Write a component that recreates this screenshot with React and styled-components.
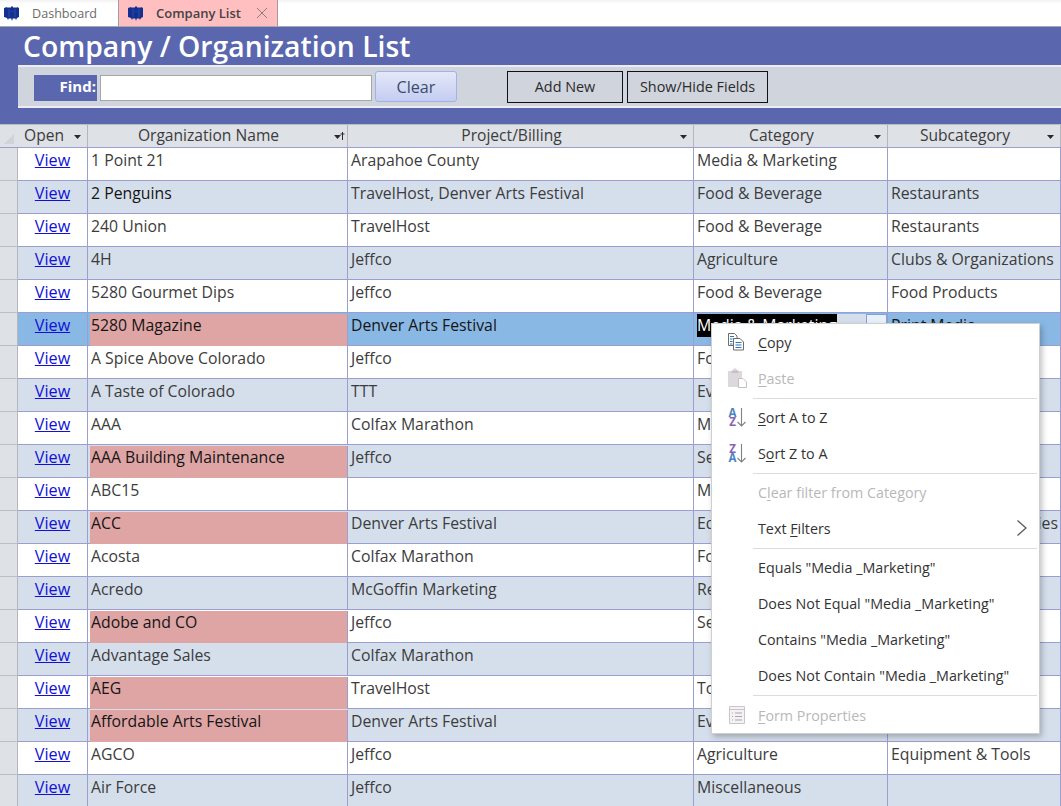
import styled, { createGlobalStyle } from "styled-components";

const GlobalStyle = createGlobalStyle`
  html, body {
    margin: 0;
    padding: 0;
    background: #ffffff;
    overflow: hidden;
  }
  body {
    font-family: "Open Sans", "Noto Sans", "Liberation Sans", sans-serif;
    color: #2b2b2b;
  }
`;

const filas = [
  { nombre: "1 Point 21", proyecto: "Arapahoe County", categoria: "Media & Marketing", sub: "" },
  { nombre: "2 Penguins", proyecto: "TravelHost, Denver Arts Festival", categoria: "Food & Beverage", sub: "Restaurants", oscuro: true },
  { nombre: "240 Union", proyecto: "TravelHost", categoria: "Food & Beverage", sub: "Restaurants" },
  { nombre: "4H", proyecto: "Jeffco", categoria: "Agriculture", sub: "Clubs & Organizations" },
  { nombre: "5280 Gourmet Dips", proyecto: "Jeffco", categoria: "Food & Beverage", sub: "Food Products" },
  { nombre: "5280 Magazine", proyecto: "Denver Arts Festival", categoria: "Media & Marketing", sub: "Print Media", rosa: true, activa: true },
  { nombre: "A Spice Above Colorado", proyecto: "Jeffco", categoria: "Food & Beverage", sub: "Food Products" },
  { nombre: "A Taste of Colorado", proyecto: "TTT", categoria: "Events", sub: "" },
  { nombre: "AAA", proyecto: "Colfax Marathon", categoria: "Media & Marketing", sub: "" },
  { nombre: "AAA Building Maintenance", proyecto: "Jeffco", categoria: "Services", sub: "Cleaning Supply", rosa: true },
  { nombre: "ABC15", proyecto: "", categoria: "Media & Marketing", sub: "" },
  { nombre: "ACC", proyecto: "Denver Arts Festival", categoria: "Education", sub: "Colleges & Universities", rosa: true },
  { nombre: "Acosta", proyecto: "Colfax Marathon", categoria: "Food & Beverage", sub: "" },
  { nombre: "Acredo", proyecto: "McGoffin Marketing", categoria: "Retail", sub: "" },
  { nombre: "Adobe and CO", proyecto: "Jeffco", categoria: "Services", sub: "", rosa: true },
  { nombre: "Advantage Sales", proyecto: "Colfax Marathon", categoria: "", sub: "" },
  { nombre: "AEG", proyecto: "TravelHost", categoria: "Tourism", sub: "", rosa: true },
  { nombre: "Affordable Arts Festival", proyecto: "Denver Arts Festival", categoria: "Events", sub: "", rosa: true },
  { nombre: "AGCO", proyecto: "Jeffco", categoria: "Agriculture", sub: "Equipment & Tools" },
  { nombre: "Air Force", proyecto: "Jeffco", categoria: "Miscellaneous", sub: "" },
];

const Logo = () => (
  <svg width="16" height="15" viewBox="0 0 16 15">
    <path fill="#12308f" d="M0 2l3-1 1 1 1-1 1 1 2-2 2 2 1-1 1 1 1-1 2 1v9l-2 1-1 2-1-2-1 1-1-1-1 3-1-3-1 1-1-1-1 2-1-2-3-1z" />
    <path fill="#2f4cab" d="M4.500 3h1v8h-1zM10.500 3h1v8h-1zM6.500 5h1v1h-1zM8.500 5h1v1h-1z" />
  </svg>
);

const FlechaFiltro = ({ orden }) => (
  <svg width="11" height="12" viewBox="0 0 11 12">
    <path fill="#2a2a2a" d="M0 5h7L3.500 9z" />
    {orden && <path fill="#2a2a2a" d="M8 2h1v8H8zM6.500 3.500h4v1h-4z" />}
  </svg>
);

const IconoCopiar = () => (
  <svg width="18" height="18" viewBox="0 0 18 18" fill="none">
    <path d="M.5.5h6l2.500 2.500v2.500H5.500v7H.5z" fill="#fff" stroke="#6d6d6d" />
    <path d="M5.500 5.500h6.500l3.500 3.500v8H5.500z" fill="#fff" stroke="#6d6d6d" />
    <path d="M2 3.500h4M2 6h2.500M2 8.500h2.500M2 11h2.500M7.500 9.500h6M7.500 12h6M7.500 14.500h6" stroke="#2f74b5" />
  </svg>
);

const IconoPegar = () => (
  <svg width="19" height="20" viewBox="0 0 19 20">
    <path fill="#dcd8dc" d="M0 3h5V1.500L7 0l2 1.500V3h5v16H0z" />
    <path fill="#c4c0c4" d="M3.500 2.500h7V5h-7z" />
    <path fill="#fff" stroke="#c4c0c4" d="M10.500 10.500h4.500l3.500 3.500v5.500h-8z" />
  </svg>
);

const IconoOrden = ({ invertido }) => (
  <Orden>
    <Letras>
      <LetraOrden $color={invertido ? "#8a5fb5" : "#4a84c0"}>{invertido ? "Z" : "A"}</LetraOrden>
      <LetraOrden $color={invertido ? "#4a84c0" : "#8a5fb5"}>{invertido ? "A" : "Z"}</LetraOrden>
    </Letras>
    <svg width="9" height="19" viewBox="0 0 9 19" fill="none">
      <path d="M4.500 0v18M.5 14l4 4 4-4" stroke="#808080" strokeWidth="1.100" />
    </svg>
  </Orden>
);

const IconoForm = () => (
  <svg width="16" height="18" viewBox="0 0 16 18" fill="none">
    <path d="M.5.5h15v17H.5z" fill="#f4f2f4" stroke="#c9c5c9" />
    <path d="M.5 3.500h15" stroke="#c9c5c9" />
    <path d="M6 7h7M6 10.500h7M6 14h7M3 7h1M3 10.500h1M3 14h1" stroke="#a9a5a9" />
  </svg>
);

const Flecha = () => (
  <svg width="12" height="18" viewBox="0 0 12 18" fill="none">
    <path d="M1.500 1.500L10 9l-8.500 7.500" stroke="#555" strokeWidth="1.200" />
  </svg>
);

export default function App() {
  return (
    <Pagina>
      <GlobalStyle />
      <BarraTabs>
        <Tab>
          <Logo />
          <span>Dashboard</span>
        </Tab>
        <Tab $activa>
          <Logo />
          <span>Company List</span>
          <Cerrar>
            <svg width="12" height="12" viewBox="0 0 12 12" fill="none">
              <path d="M1 1l10 10M11 1L1 11" stroke="#8d7f7f" />
            </svg>
          </Cerrar>
        </Tab>
      </BarraTabs>

      <Encabezado>
        <Titulo>Company / Organization List</Titulo>
        <Herramientas>
          <Find>Find:</Find>
          <CampoFind />
          <BotonClear>Clear</BotonClear>
          <BotonNegro $ancho="116px" $margen="50px">Add New</BotonNegro>
          <BotonNegro $ancho="141px" $margen="4px">Show/Hide Fields</BotonNegro>
        </Herramientas>
      </Encabezado>

      <Tabla>
        <FilaCabecera>
          <Esquina>
            <svg width="12" height="12" viewBox="0 0 12 12">
              <path fill="#cfd4da" d="M11 1v10H1z" />
            </svg>
          </Esquina>
          <CeldaCabecera $pegado>
            Open
            <Filtro><FlechaFiltro /></Filtro>
          </CeldaCabecera>
          <CeldaCabecera>
            Organization Name
            <Filtro><FlechaFiltro orden /></Filtro>
          </CeldaCabecera>
          <CeldaCabecera>
            Project/Billing
            <Filtro><FlechaFiltro /></Filtro>
          </CeldaCabecera>
          <CeldaCabecera>
            Category
            <Filtro><FlechaFiltro /></Filtro>
          </CeldaCabecera>
          <CeldaCabecera>
            Subcategory
            <Filtro><FlechaFiltro /></Filtro>
          </CeldaCabecera>
        </FilaCabecera>

        {filas.map((fila, i) => (
          <Fila key={fila.nombre} $alterna={i % 2 === 1} $activa={fila.activa}>
            <Selector />
            <CeldaVer>
              <Ver href="#">View</Ver>
            </CeldaVer>
            <Celda $rosa={fila.rosa} $oscuro={fila.oscuro || fila.rosa}>
              {fila.nombre}
            </Celda>
            <Celda $oscuro={fila.activa}>{fila.proyecto}</Celda>
            {fila.activa ? (
              <Celda $conCombo>
                <Seleccion>{fila.categoria}</Seleccion>
                <RellenoCombo />
                <BotonCombo />
              </Celda>
            ) : (
              <Celda>{fila.categoria}</Celda>
            )}
            <Celda $oscuro={fila.activa}>{fila.sub}</Celda>
          </Fila>
        ))}
      </Tabla>

      <Menu>
        <Item>
          <Icono><IconoCopiar /></Icono>
          <span><Atajo>C</Atajo>opy</span>
        </Item>
        <Item $apagado>
          <Icono><IconoPegar /></Icono>
          <span><Atajo>P</Atajo>aste</span>
        </Item>
        <Separador />
        <Item>
          <Icono><IconoOrden /></Icono>
          <span><Atajo>S</Atajo>ort A to Z</span>
        </Item>
        <Item>
          <Icono><IconoOrden invertido /></Icono>
          <span>S<Atajo>o</Atajo>rt Z to A</span>
        </Item>
        <Separador />
        <Item $apagado>
          <Icono />
          <span>C<Atajo>l</Atajo>ear filter from Category</span>
        </Item>
        <Item>
          <Icono />
          <span>Text <Atajo>F</Atajo>ilters</span>
          <FlechaMenu><Flecha /></FlechaMenu>
        </Item>
        <Separador />
        <Item><Icono /><span>Equals "Media _Marketing"</span></Item>
        <Item><Icono /><span>Does Not Equal "Media _Marketing"</span></Item>
        <Item><Icono /><span>Contains "Media _Marketing"</span></Item>
        <Item><Icono /><span>Does Not Contain "Media _Marketing"</span></Item>
        <Separador $abajo="1px" />
        <Item $apagado>
          <Icono><IconoForm /></Icono>
          <span><Atajo>F</Atajo>orm Properties</span>
        </Item>
      </Menu>
    </Pagina>
  );
}

const Pagina = styled.div`
  width: 1061px;
  height: 806px;
  position: relative;
  overflow: hidden;
`;

const BarraTabs = styled.div`
  display: flex;
  height: 27px;
  box-sizing: border-box;
  background: linear-gradient(#f2f2f2, #ffffff 4px);
  border-bottom: 1px solid #a8a8a8;
`;

const Tab = styled.div`
  display: flex;
  align-items: center;
  gap: 12px;
  width: ${({ $activa }) => ($activa ? "160px" : "118px")};
  padding-left: ${({ $activa }) => ($activa ? "9px" : "4px")};
  box-sizing: border-box;
  font-size: ${({ $activa }) => ($activa ? "13px" : "12.6px")};
  font-weight: ${({ $activa }) => ($activa ? 600 : 400)};
  color: ${({ $activa }) => ($activa ? "#444444" : "#6b6b6b")};
  background: ${({ $activa }) => ($activa ? "#ffbfc0" : "transparent")};
  border-left: ${({ $activa }) => ($activa ? "1px solid #a89a9a" : "none")};
  border-right: ${({ $activa }) => ($activa ? "1px solid #a89a9a" : "none")};
`;

const Cerrar = styled.span`
  display: flex;
  margin-left: 3px;
`;

const Encabezado = styled.div`
  background: #5a67af;
  height: 97px;
  box-sizing: border-box;
  padding: 0 0 0 18px;
`;

const Titulo = styled.h1`
  margin: 0;
  padding-left: 5px;
  font-size: 28.3px;
  line-height: 38px;
  height: 38px;
  font-weight: 600;
  color: #ffffff;
`;

const Herramientas = styled.div`
  display: flex;
  align-items: flex-start;
  height: 43px;
  padding-left: 16px;
  box-sizing: border-box;
  background: #d0d4dd;
  border-top: 2px solid #ececf2;
  border-bottom: 2px solid #ececf2;
`;

const Find = styled.div`
  width: 63px;
  height: 26px;
  margin-top: 8px;
  background: #5a67af;
  color: #ffffff;
  font-size: 15px;
  font-weight: 700;
  line-height: 23px;
  text-align: right;
  padding-right: 1px;
  box-sizing: border-box;
`;

const CampoFind = styled.div`
  width: 272px;
  height: 26px;
  margin: 8px 0 0 3px;
  box-sizing: border-box;
  background: #ffffff;
  border: 1px solid #a6a6a6;
`;

const BotonClear = styled.div`
  width: 82px;
  height: 31px;
  margin: 4px 0 0 3px;
  box-sizing: border-box;
  border: 1px solid #a3b1e6;
  border-radius: 3px;
  background: linear-gradient(#e4e8f8, #c4cdf2);
  color: #3d4a6b;
  font-size: 16.2px;
  line-height: 30px;
  text-align: center;
`;

const BotonNegro = styled.div`
  width: ${({ $ancho }) => $ancho};
  height: 32px;
  margin: 4px 0 0 ${({ $margen }) => $margen};
  box-sizing: border-box;
  border: 1px solid #111111;
  color: #2b2b2b;
  font-size: 14.4px;
  line-height: 30px;
  text-align: center;
  white-space: nowrap;
`;

const columnas = "18px 70px 260px 346px 194px 173px";

const Tabla = styled.div`
  display: flex;
  flex-direction: column;
`;

const FilaCabecera = styled.div`
  display: grid;
  grid-template-columns: ${columnas};
  height: 24px;
  background: #dee1e6;
  border-top: 1px solid #b9bcc4;
  border-bottom: 1px solid #9a9fd0;
  box-sizing: border-box;
`;

const Esquina = styled.div`
  display: flex;
  align-items: flex-end;
  justify-content: flex-end;
  padding: 0 3px 2px 0;
`;

const CeldaCabecera = styled.div`
  position: relative;
  text-align: ${({ $pegado }) => ($pegado ? "left" : "center")};
  padding: ${({ $pegado }) => ($pegado ? "0 0 0 6px" : "0 18px 0 0")};
  border-right: 1px solid #b3b6bd;
  box-sizing: border-box;
  font-size: 15.6px;
  line-height: 21px;
  color: #3c3c3c;
`;

const Filtro = styled.span`
  position: absolute;
  right: 2px;
  top: 5px;
  display: flex;
`;

const Fila = styled.div`
  display: grid;
  grid-template-columns: ${columnas};
  height: 33px;
  box-sizing: border-box;
  background: ${({ $alterna, $activa }) =>
    $activa ? "#8ab8e4" : $alterna ? "#d5dfec" : "#ffffff"};
  border-bottom: 1px solid #9a9fd0;
`;

const Selector = styled.div`
  height: 33px;
  align-self: start;
  box-sizing: border-box;
  background: #dee1e6;
  border-right: 1px solid #b3b6bd;
  border-bottom: 1px solid #bcbfc6;
`;

const CeldaVer = styled.div`
  text-align: center;
  border-right: 1px solid #9a9fd0;
  font-size: 16.2px;
  line-height: 24px;
`;

const Ver = styled.a`
  color: #1010d8;
`;

const Celda = styled.div`
  display: ${({ $conCombo }) => ($conCombo ? "flex" : "block")};
  padding-left: ${({ $rosa }) => ($rosa ? "1px" : "3px")};
  margin-left: ${({ $rosa }) => ($rosa ? "2px" : "0")};
  margin-top: ${({ $rosa }) => ($rosa ? "1px" : "0")};
  border-right: 1px solid #9a9fd0;
  box-sizing: border-box;
  font-size: 15.8px;
  line-height: ${({ $rosa }) => ($rosa ? "23px" : "24px")};
  white-space: nowrap;
  overflow: hidden;
  color: ${({ $oscuro }) => ($oscuro ? "#151515" : "#3c3c3c")};
  background: ${({ $rosa }) => ($rosa ? "#dfa5a5" : "transparent")};
`;

const Seleccion = styled.span`
  background: #000000;
  color: #ffffff;
  height: 23px;
  margin-top: 1px;
  line-height: 22px;
`;

const RellenoCombo = styled.span`
  flex: 1;
  height: 32px;
  margin-top: 1px;
  background: #d5dfec;
`;

const BotonCombo = styled.span`
  width: 21px;
  height: 32px;
  margin-top: 1px;
  box-sizing: border-box;
  background: #e8f0fa;
  border: 1px solid #7fa3d6;
`;

const Menu = styled.div`
  position: absolute;
  left: 711px;
  top: 323px;
  width: 329px;
  height: 411px;
  box-sizing: border-box;
  padding: 0 2px 0 0;
  background: #ffffff;
  border: 1px solid #cfcfcf;
  box-shadow: 2px 3px 6px rgba(0, 0, 0, 0.25);
  z-index: 10;
`;

const Item = styled.div`
  display: flex;
  align-items: center;
  position: relative;
  height: 36px;
  font-size: 14.3px;
  color: ${({ $apagado }) => ($apagado ? "#b8b8b8" : "#333333")};
`;

const Icono = styled.span`
  display: flex;
  justify-content: center;
  width: 46px;
  padding-left: 4px;
  box-sizing: border-box;
`;

const Atajo = styled.span`
  text-decoration: underline;
  text-underline-offset: 2px;
  text-decoration-thickness: 1px;
`;

const Orden = styled.span`
  display: flex;
  align-items: flex-start;
`;

const Letras = styled.span`
  display: flex;
  flex-direction: column;
  width: 9px;
`;

const LetraOrden = styled.span`
  display: block;
  height: 9px;
  font-size: 11.5px;
  line-height: 9px;
  font-weight: 700;
  text-align: center;
  color: ${({ $color }) => $color};
`;

const FlechaMenu = styled.span`
  position: absolute;
  right: 9px;
  top: 9px;
  display: flex;
`;

const Separador = styled.div`
  height: 1px;
  margin: 2px 0 ${({ $abajo }) => $abajo || "0"} 41px;
  background: #dcdcdc;
`;
